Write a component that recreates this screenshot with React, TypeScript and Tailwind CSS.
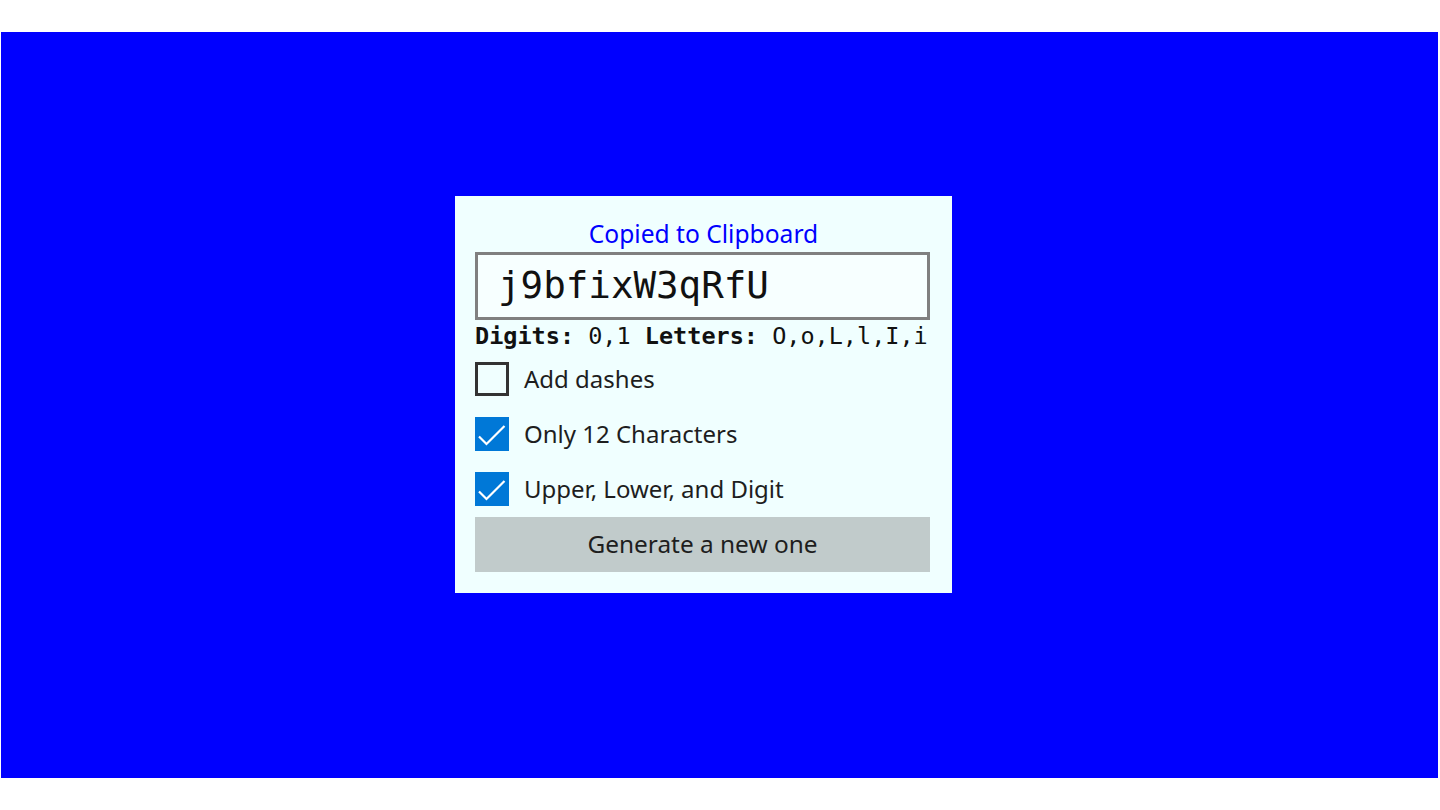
import { useState } from "react";

type Opt = { id: string; label: string; checked: boolean };

const OPTIONS: Opt[] = [
  { id: "dashes", label: "Add dashes", checked: false },
  { id: "twelve", label: "Only 12 Characters", checked: true },
  { id: "mixed", label: "Upper, Lower, and Digit", checked: true },
];

function Check({ checked }: { checked: boolean }) {
  return checked ? (
    <span className="flex h-[34px] w-[34px] shrink-0 items-center justify-center bg-[#0078d7]">
      <svg width="34" height="34" viewBox="0 0 34 34" fill="none" stroke="white" strokeWidth="2.2">
        <path d="M4 19.5l7.5 7.5L29.5 9" />
      </svg>
    </span>
  ) : (
    <span className="h-[34px] w-[34px] shrink-0 border-[3px] border-[#333333]" />
  );
}

export default function App() {
  const [opts, setOpts] = useState(OPTIONS);
  const mono = { fontFamily: '"DejaVu Sans Mono", "Liberation Mono", monospace' };

  return (
    <div className="h-[810px] w-[1440px] bg-white pl-px pr-[2px] pt-[32px] pb-[32px]" style={{ fontFamily: '"Noto Sans", "Open Sans", sans-serif' }}>
      <div className="h-[746px] bg-[#0000ff] pl-[454px] pt-[164px]">
        {/* Card */}
        <div className="w-[497px] bg-[#f0ffff] px-[20px] pt-[19px] pb-[21px]">
          <div className="h-[37px] text-center text-[24.6px] leading-[37px] text-[#0000ff]">
            Copied to Clipboard
          </div>
          <div className="flex h-[68px] w-[455px] items-center border-[3px] border-[#808080] bg-[#f7ffff] pl-[20px]">
            <span className="text-[37.5px] leading-none text-[#111]" style={mono}>j9bfixW3qRfU</span>
          </div>
          <div className="h-[32px] whitespace-nowrap text-[23.5px] leading-[32px] text-[#111]" style={mono}>
            <b>Digits:</b> 0,1 <b>Letters:</b> O,o,L,l,I,i
          </div>
          <div className="mt-[10px] flex flex-col gap-[21px]">
            {opts.map((o) => (
              <button
                key={o.id}
                type="button"
                onClick={() => setOpts((p) => p.map((x) => (x.id === o.id ? { ...x, checked: !x.checked } : x)))}
                className="flex h-[34px] items-center gap-[15px] text-left"
              >
                <Check checked={o.checked} />
                <span className="text-[24px] leading-none text-[#1e1e1e]">{o.label}</span>
              </button>
            ))}
          </div>
          <button
            type="button"
            className="mt-[11px] h-[55px] w-[455px] bg-[#c1cbcb] text-center text-[24.4px] text-[#1e1e1e]"
          >
            Generate a new one
          </button>
        </div>
      </div>
    </div>
  );
}
